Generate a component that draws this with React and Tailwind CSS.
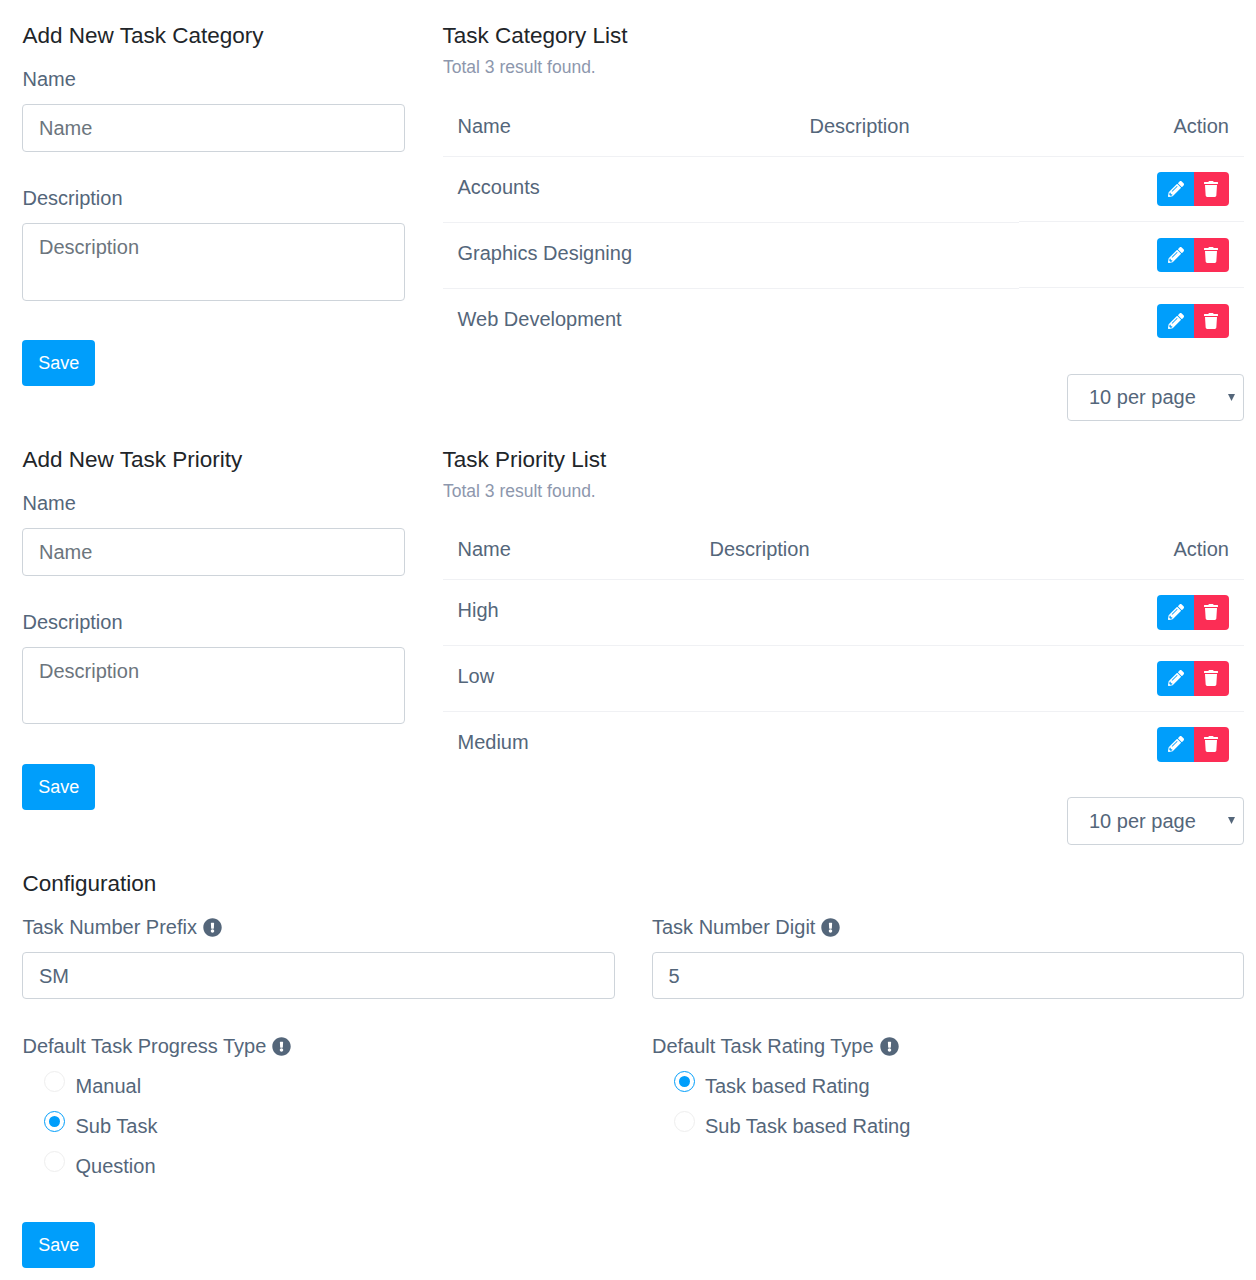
import { FaPencilAlt, FaTrash, FaExclamationCircle } from 'react-icons/fa';

function Heading({ children, className = 'pl-[0.5px]' }) {
  return <h4 className={`h-[26px] text-[22.5px] leading-[28px] text-[#212529] font-normal ${className}`}>{children}</h4>;
}

function Label({ children, hint }) {
  return (
    <label className="flex items-center h-[30px] pl-[0.5px] text-[20px] leading-[30px] text-[#54667a]">
      {children}
      {hint && <FaExclamationCircle className="ml-[6px] text-[19px] text-[#54667a]" />}
    </label>
  );
}

function SaveButton() {
  return (
    <button className="w-[73px] h-[46px] pl-[0.5px] rounded-[4px] bg-[#009efb] text-white text-[18px] text-center">Save</button>
  );
}

function TextInput({ placeholder, value, height = 'h-[48px]', nudge = '' }) {
  return (
    <input
      type="text"
      placeholder={placeholder}
      defaultValue={value}
      className={`block w-full ${height} mt-[10px] px-4 ${nudge} rounded-[4px] border border-[#ced4da] bg-white text-[20px] text-[#54667a] placeholder:text-[#6c757d] outline-none`}
    />
  );
}

function AddForm({ title, areaHeight, buttonGap }) {
  return (
    <div className="w-[383px] shrink-0">
      <Heading>{title}</Heading>
      <div className="mt-4">
        <Label>Name</Label>
        <TextInput placeholder="Name" />
      </div>
      <div className="mt-[31px]">
        <Label>Description</Label>
        <textarea
          placeholder="Description"
          className={`block w-full ${areaHeight} mt-[10px] px-4 py-2 rounded-[4px] border border-[#ced4da] bg-white text-[20px] leading-[30px] text-[#54667a] placeholder:text-[#6c757d] outline-none resize-none`}
        />
      </div>
      <div className={buttonGap}>
        <SaveButton />
      </div>
    </div>
  );
}

function RowActions({ height }) {
  return (
    <div className="flex">
      <button className={`flex items-center justify-center w-[37px] ${height} pl-px pb-px rounded-l-[4px] bg-[#009efb] text-white text-[16px]`}>
        <FaPencilAlt />
      </button>
      <button className={`flex items-center justify-center w-[35px] ${height} pr-px pb-px rounded-r-[4px] bg-[#fc2d55] text-white text-[16px]`}>
        <FaTrash />
      </button>
    </div>
  );
}

function ListTable({ title, rows, nameWidth, tableGap, selectClass, buttonHeight, stepped }) {
  return (
    <div className="flex-1">
      <Heading className="-ml-[0.5px]">{title}</Heading>
      <p className="mt-2 h-[22px] text-[17.5px] leading-[22px] text-[#8d97ad]">Total 3 result found.</p>
      <div className={`flex items-center h-[61px] pl-[14.5px] pr-[15px] border-b border-[#f0f1f4] text-[20px] text-[#54667a] ${tableGap}`}>
        <div className={nameWidth}>Name</div>
        <div>Description</div>
        <div className="ml-auto">Action</div>
      </div>
      {rows.map((row, i) => (
        <div key={row} className="flex items-start h-[66px]">
          <div className={`w-[576px] h-[66px] pl-[14.5px] pt-[15px] text-[20px] leading-[30px] text-[#54667a] ${i < 2 ? 'border-b border-[#f0f1f4]' : ''}`}>
            {row}
          </div>
          <div className={`flex-1 flex justify-end ${stepped ? 'h-[65px]' : 'h-[66px]'} pt-[15px] pr-[15px] ${i < 2 ? 'border-b border-[#f0f1f4]' : ''}`}>
            <RowActions height={buttonHeight} />
          </div>
        </div>
      ))}
      <div className="flex justify-end mt-[19px]">
        <div className="relative w-[177px]">
          <select className={`block w-full ${selectClass} pl-[21px] pr-8 rounded-[4px] border border-[#ced4da] bg-white text-[20px] text-[#54667a] appearance-none outline-none`}>
            <option>10 per page</option>
          </select>
          <svg className="absolute right-[9px] top-[20px] w-[7px] h-[7px]" viewBox="0 0 7 7">
            <polygon points="0,0 7,0 3.5,7" fill="#54667a" />
          </svg>
        </div>
      </div>
    </div>
  );
}

function Radio({ label, checked }) {
  return (
    <div className="flex items-start h-[40px] ml-[22px]">
      <span className={`flex items-center justify-center w-[21px] h-[21px] mt-[5px] rounded-full border bg-white ${checked ? 'border-[#009efb]' : 'border-[#eeeeee]'}`}>
        {checked && <span className="w-[11px] h-[11px] rounded-full bg-[#009efb]" />}
      </span>
      <span className="ml-[10.5px] text-[20px] leading-[40px] text-[#54667a]">{label}</span>
    </div>
  );
}

export default function App() {
  return (
    <div className="w-[1256px] h-[1280px] pl-[22px] pr-3 pt-[22px] bg-white overflow-hidden font-['Liberation_Sans',Arial,sans-serif]">
      {/* Category */}
      <div className="flex gap-[38px] mb-[25px]">
        <AddForm title="Add New Task Category" areaHeight="h-[78px]" buttonGap="mt-[39px]" />
        <ListTable
          title="Task Category List"
          rows={['Accounts', 'Graphics Designing', 'Web Development']}
          nameWidth="w-[352px]"
          tableGap="mt-[18px]"
          selectClass="h-[47px] pb-[2px]"
          buttonHeight="h-[34px]"
          stepped
        />
      </div>

      {/* Priority */}
      <div className="flex gap-[38px] mb-[25px]">
        <AddForm title="Add New Task Priority" areaHeight="h-[77px]" buttonGap="mt-[40px]" />
        <ListTable
          title="Task Priority List"
          rows={['High', 'Low', 'Medium']}
          nameWidth="w-[252px]"
          tableGap="mt-[17px]"
          selectClass="h-[48px]"
          buttonHeight="h-[35px]"
        />
      </div>

      {/* Configuration */}
      <Heading>Configuration</Heading>
      <div className="grid grid-cols-2 gap-x-[37px] mt-4">
        <div>
          <Label hint>Task Number Prefix</Label>
          <TextInput value="SM" height="h-[47px]" nudge="pt-[2px]" />
        </div>
        <div>
          <Label hint>Task Number Digit</Label>
          <TextInput value="5" height="h-[47px]" nudge="pt-[2px]" />
        </div>
        <div className="mt-8">
          <Label hint>Default Task Progress Type</Label>
          <div className="mt-[5px]">
            <Radio label="Manual" />
            <Radio label="Sub Task" checked />
            <Radio label="Question" />
          </div>
        </div>
        <div className="mt-8">
          <Label hint>Default Task Rating Type</Label>
          <div className="mt-[5px]">
            <Radio label="Task based Rating" checked />
            <Radio label="Sub Task based Rating" />
          </div>
        </div>
      </div>
      <div className="mt-9">
        <SaveButton />
      </div>
    </div>
  );
}
